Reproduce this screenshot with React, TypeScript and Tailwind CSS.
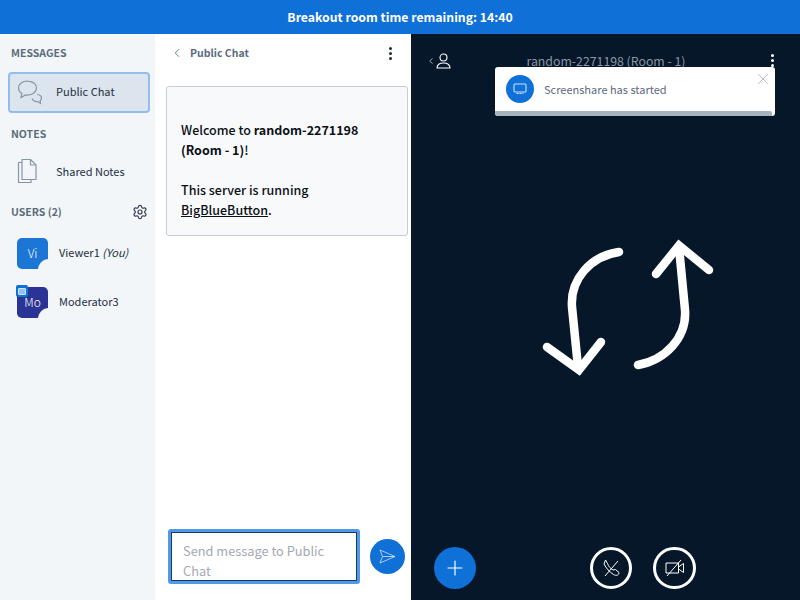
import React from 'react';
import { ChevronLeft, Plus, Settings, X } from 'lucide-react';

const Dots = ({ className }: { className: string }) => (
  <div className={`flex flex-col gap-[2px] ${className}`}>
    <span className="w-[3px] h-[3px] rounded-full bg-current" />
    <span className="w-[3px] h-[3px] rounded-full bg-current" />
    <span className="w-[3px] h-[3px] rounded-full bg-current" />
  </div>
);

const SectionTitle = ({ children }: { children: React.ReactNode }) => (
  <h2 className="text-[10.5px] leading-4 font-semibold text-[#5b6b7c]">{children}</h2>
);

const UserRow = ({ initials, color, name, you, presenter }: { initials: string; color: string; name: string; you?: boolean; presenter?: boolean }) => (
  <div className="flex items-center h-[31px] pl-[17px]">
    <div className={`relative w-[31px] h-[31px] rounded-[5px] flex items-center justify-center text-white text-[12px] font-light ${color}`}>
      <span className="relative -mt-[1px]">{initials}</span>
      <span className="absolute -right-[1px] -bottom-[1px] w-[11px] h-[11px] rounded-tl-full bg-[#f3f6f9]" />
      {presenter && (
        <span className="absolute -left-[1px] -top-[2px] w-[12px] h-[12px] rounded-[2px] bg-[#0f70d7] flex items-center justify-center">
          <span className="w-[8px] h-[7px] bg-[#8fc1f5] border border-[#cfe3f9] rounded-[1px]" />
        </span>
      )}
    </div>
    <span className="ml-[11px] -mt-[2px] text-[11px] text-[#222f3e]">
      {name} {you && <em className="italic">(You)</em>}
    </span>
  </div>
);

export default function App() {
  return (
    <div className="w-[800px] h-[600px] flex flex-col overflow-hidden font-['Noto_Sans_CJK_SC','Liberation_Sans',sans-serif]">
      <div className="h-[34px] shrink-0 bg-[#0f70d7] text-white text-[12.25px] font-semibold flex items-center justify-center">
        Breakout room time remaining: 14:40
      </div>

      <div className="flex flex-1 min-h-0">
        {/* sidebar */}
        <aside className="w-[155px] shrink-0 bg-[#f3f6f9] flex flex-col">
          <div className="pl-[11px] pt-[11px]"><SectionTitle>MESSAGES</SectionTitle></div>
          <div className="mt-[11px] ml-[8px] w-[142px] h-[41px] rounded-[4px] border-2 border-[#92bdec] bg-[#dce4ed] flex items-center pl-[7px]">
            <svg width="26" height="26" viewBox="0 0 26 26" fill="none" stroke="#8795a4" strokeWidth="1.200">
              <path d="M10.500 1C5.500 1 1.500 4 1.500 8c0 2.300 1.300 4.200 3.300 5.500L4 17.500l4.500-2.500c.6.1 1.300.1 2 .1 5 0 9-3 9-7s-4-7-9-7z" />
              <path d="M20 14.500c2.500.2 4.500 1.500 4.500 3.500 0 1-.5 1.800-1.300 2.400l.3 3-2.800-1.900c-2.800.2-5-1.200-5.500-3.200" />
            </svg>
            <span className="ml-[13px] -mt-[2px] text-[11px] text-[#222f3e]">Public Chat</span>
          </div>
          <div className="pl-[11px] mt-[13px]"><SectionTitle>NOTES</SectionTitle></div>
          <div className="mt-[16px] flex items-center h-[26px] pl-[17px]">
            <svg width="20" height="26" viewBox="0 0 20 26" fill="none" stroke="#8795a4" strokeWidth="1.200" strokeLinejoin="round">
              <path d="M5 4.500H1.500v20H14v-3" />
              <path d="M5 1.500h8.500L19 7v14.500H5z" />
              <path d="M13.500 1.500V7H19" />
            </svg>
            <span className="ml-[19px] text-[11px] text-[#222f3e]">Shared Notes</span>
          </div>
          <div className="mt-[20px] pl-[11px] pr-[7px] flex items-center justify-between">
            <SectionTitle>USERS (2)</SectionTitle>
            <Settings className="w-[16px] h-[16px] text-[#333f4d]" strokeWidth={1.800} />
          </div>
          <div className="mt-[18px] flex flex-col gap-[18px]">
            <UserRow initials="Vi" color="bg-[#1b76d6]" name="Viewer1" you />
            <UserRow initials="Mo" color="bg-[#2a3494]" name="Moderator3" presenter />
          </div>
        </aside>

        {/* chat */}
        <section className="w-[256px] shrink-0 bg-white flex flex-col">
          <div className="h-[38px] flex items-center pl-[15px] pr-[19px] shrink-0">
            <ChevronLeft className="w-[14px] h-[14px] text-[#5b6b7c]" strokeWidth={1.500} />
            <span className="ml-[6px] text-[10.5px] font-semibold text-[#5b6b7c]">Public Chat</span>
            <Dots className="ml-auto text-[#1f2a37]" />
          </div>
          <div className="mt-[14px] mx-[11px] w-[242px] h-[150px] rounded-[3px] border border-[#c5ced8] bg-[#f8f9fb] px-[14px] pt-[33px] text-[12.5px] leading-[20px] font-medium text-[#0b1015]">
            <p className="w-[200px]">Welcome to <strong className="font-bold">random-2271198 (Room - 1)</strong>!</p>
            <p className="w-[200px] mt-[20px]">This server is running <span className="underline">BigBlueButton</span>.</p>
          </div>
          <div className="mt-auto mb-[16px] ml-[13px] flex items-center">
            <div className="w-[192px] h-[55px] rounded-[3px] border-[3px] border-[#4f9ae8]">
              <div className="w-full h-full border border-[#1f3a5f] bg-white pl-[11px] pt-[8px] pr-[20px] text-[12.8px] leading-[20px] text-[#a3a9b1]">
                Send message to Public Chat
              </div>
            </div>
            <button className="ml-[10px] w-[35px] h-[35px] rounded-full bg-[#0f70d7] flex items-center justify-center">
              <svg width="17" height="15" viewBox="0 0 17 15" fill="none" stroke="#d5e6f8" strokeWidth="0.800">
                <path d="M1 1l15 6.500L1 14l2.500-6.500zM3.500 7.500H16" />
              </svg>
            </button>
          </div>
        </section>

        {/* presentation area */}
        <main className="relative flex-1 bg-[#06172a] flex flex-col">
          <div className="h-[54px] shrink-0 flex items-start pt-[19px] pl-[15px] pr-[26px] text-white">
            <ChevronLeft className="w-[10px] h-[14px] mt-[1px]" strokeWidth={1.500} />
            <svg width="15" height="16" viewBox="0 0 15 16" fill="none" stroke="white" strokeWidth="1.100">
              <circle cx="7.500" cy="4.500" r="3.500" />
              <path d="M1 15c0-3.500 2.500-5 6.500-5s6.500 1.500 6.500 5z" />
            </svg>
            <span className="flex-1 text-center text-[12.3px] leading-4 text-[#8c96a2] pr-[10px]">random-2271198 (Room - 1)</span>
            <Dots className="text-white pt-[1px]" />
          </div>

          {/* toast over the header */}
          <div className="absolute left-[84px] top-[33px] w-[280px] h-[49px] rounded-[3px] bg-white overflow-hidden flex items-center pl-[11px] pb-[5px]">
            <div className="w-[28px] h-[28px] rounded-full bg-[#0f70d7] flex items-center justify-center">
              <svg width="14" height="12" viewBox="0 0 14 12" fill="none" stroke="#cfe3f9" strokeWidth="1.100">
                <rect x="1" y="1" width="12" height="8" rx="1" />
                <path d="M3.500 10.500h7" strokeDasharray="2 1" />
              </svg>
            </div>
            <span className="ml-[10px] text-[11px] text-[#5b6b7c]">Screenshare has started</span>
            <X className="absolute right-[3px] top-[3px] w-[18px] h-[18px] text-[#9aa5b1]" strokeWidth={1} />
            <span className="absolute left-0 right-[3px] bottom-0 h-[5px] bg-[#a7b3bd] rounded-tr-[2px]" />
          </div>

          <div className="flex-1 min-h-0">
            <svg width="389" height="449" viewBox="0 0 389 449" fill="none" stroke="white" strokeWidth="8.500" strokeLinecap="round" strokeLinejoin="round" className="block">
              <g transform="translate(119 142)">
                <path d="M89 22C60 26 40 50 42 77L48 137" />
                <path d="M17 117L49 140L71 112" strokeLinejoin="miter" />
                <path d="M108 135C135 130 157 108 155 80L149 17" />
                <path d="M126 44L149 15.500L179 40" strokeLinejoin="miter" />
              </g>
            </svg>
          </div>

          <div className="h-[63px] shrink-0 flex items-start pt-[10px] pl-[23px]">
            <button className="w-[42px] h-[42px] rounded-full bg-[#0f70d7] flex items-center justify-center text-white">
              <Plus className="w-[24px] h-[24px]" strokeWidth={1.200} />
            </button>
            <button className="ml-[114px] w-[42px] h-[42px] rounded-full border-[3px] border-white flex items-center justify-center">
              <svg width="20" height="20" viewBox="0 0 20 20" fill="none" stroke="white" strokeWidth="1" strokeLinejoin="round">
                <path d="M4.500 2L6.500 5.500C7.500 8.500 9.500 10.500 12 12L14.500 11.500L18 14.500C18 17.500 15 18 12.500 16.500C8.500 14 5 10 3 6Z" />
                <path d="M4 18L17 3" />
              </svg>
            </button>
            <button className="ml-[21px] w-[43px] h-[42px] rounded-full border-[3px] border-white flex items-center justify-center">
              <svg width="20" height="18" viewBox="0 0 20 18" fill="none" stroke="white" strokeWidth="1">
                <path d="M13.500 4H1v10h12.500z" />
                <path d="M13.500 8L18.500 4.500v9L13.500 10" />
                <path d="M2 17L16 1" />
              </svg>
            </button>
          </div>
        </main>
      </div>
    </div>
  );
}
